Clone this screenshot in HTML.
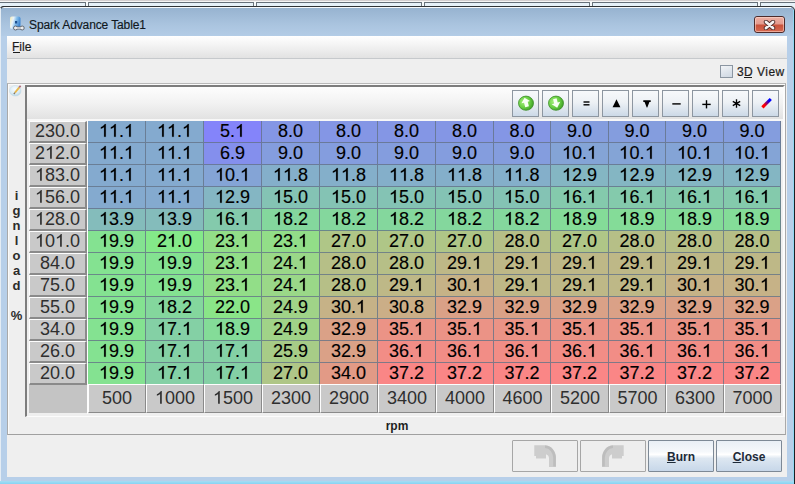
<!DOCTYPE html>
<html><head><meta charset="utf-8">
<style>
*{margin:0;padding:0;box-sizing:border-box}
html,body{width:795px;height:484px;overflow:hidden;background:#e9eef3;font-family:"Liberation Sans",sans-serif}
.a{position:absolute}
/* top strip behind window */
#strip{left:0;top:0;width:795px;height:6px;background:#e6f1f9}
#strip .l0{left:0;top:0;width:795px;height:1px;background:#d3cfd1}
#strip .l1{left:0;top:1px;width:795px;height:1px;background:#f5f5f5}
#strip .l2{left:0;top:2px;width:795px;height:1px;background:#66707a}
.tab{top:2px;width:4px;height:4px;border-left:1px solid #6a747c;border-right:1px solid #6a747c;background:#f4f8fb}
/* window */
#win{left:0;top:6px;width:795px;height:478px;background:#b7cfe9;border-top:1px solid #2e3236;border-right:1px solid #1c2024;border-radius:4px 5px 0 0}
#winhl{left:1px;top:7px;width:790px;height:1px;background:#f6f9fc}
#title{left:1px;top:8px;width:792px;height:28px;background:linear-gradient(#97b3d0,#aac4df 60%,#b3cce6)}
#lframe{left:0;top:8px;width:1px;height:476px;background:#e4ecf4}
#rframe{left:793px;top:10px;width:1px;height:474px;background:#8fd8f2}
#bframe{left:0;top:481px;width:794px;height:3px;background:linear-gradient(#a8dcf2,#84d4f4)}
#ttext{left:29px;top:18px;font-size:12px;color:#101820;white-space:nowrap;letter-spacing:-0.12px;-webkit-text-stroke:0.15px #101820}
#close{left:754px;top:16px;width:31px;height:17px;border:1px solid #4d2b2b;border-radius:3px;background:linear-gradient(#eeb0a4 0%,#e39a8e 48%,#c8503a 52%,#d66a52 100%)}
/* menu */
#menu{left:7px;top:36px;width:780px;height:22px;background:linear-gradient(#ffffff,#f4f4f4 40%,#e2e2e2)}
#menuline{left:7px;top:58px;width:780px;height:1px;background:#c6c9cc}
#content{left:7px;top:59px;width:780px;height:418px;background:#efefef}
.mtext{font-size:12px;color:#1b1b1b;white-space:nowrap;-webkit-text-stroke:0.2px #1b1b1b}
/* checkbox */
#chk{left:720px;top:65px;width:13px;height:13px;border:1px solid #8b96a2;background:linear-gradient(160deg,#f2f4f7,#dbe2ea 60%,#cfd8e2)}
/* outer panel */
#opanel{left:7px;top:83px;width:779px;height:352px;border-top:1px solid #b9b9b9;border-left:1px solid #a9a9a9;border-bottom:1px solid #a0a0a0;border-right:1px solid #a9a9a9}
#opanelhl{left:8px;top:84px;width:777px;height:350px;border-top:1px solid #fbfbfb;border-left:1px solid #fbfbfb}
#ipanel{left:25px;top:85px;width:760px;height:332px;border-top:2px solid #7d7d7d;border-left:2px solid #7d7d7d;border-right:2px solid #fcfcfc;border-bottom:1px solid #fcfcfc;background:#efefef}
#toolbar{left:27px;top:87px;width:756px;height:32px;background:linear-gradient(#fdfdfd,#f2f2f2 50%,#e2e2e2)}
#tbline{left:27px;top:119px;width:756px;height:2px;background:#f7f7f7}
.tb{position:absolute;top:90px;width:27px;height:27px;border:1px solid #8d96a0;background:linear-gradient(#f7f9fb,#edf1f5 45%,#ccd9e7);display:flex;align-items:center;justify-content:center}
.ic{position:absolute}
.one{vertical-align:baseline;overflow:visible}
.dc .one{fill:#000;stroke:#000;stroke-width:18}
.rh .one,.ch .one{fill:#2f2f2f}
/* table */
.rh{position:absolute;left:29px;width:58px;height:22px;background:#c9c9c9;border-top:1px solid #fdfdfd;border-left:1px solid #fdfdfd;border-right:2px solid #8a8a8a;border-bottom:2px solid #8a8a8a;color:#2f2f2f;font-size:18px;line-height:19px;text-align:center}
.dc{position:absolute;height:22px;border-right:1px solid rgba(100,115,135,0.8);border-bottom:1px solid rgba(100,115,135,0.8);color:#000;-webkit-text-stroke:0.15px #000;font-size:18px;line-height:21px;text-align:center}
.ch{position:absolute;top:384px;height:29px;background:#c9c9c9;border-top:1px solid #fdfdfd;border-left:1px solid #fdfdfd;border-right:1px solid #8a8a8a;border-bottom:1px solid #8a8a8a;color:#2f2f2f;font-size:18px;line-height:27px;text-align:center}
#corner{left:29px;top:385px;width:58px;height:28px;background:#c4c4c4}
#wline{left:87px;top:120px;width:1px;height:294px;background:#fdfdfd}
#vlab{left:9px;top:188px;width:15px;font-size:13px;font-weight:bold;line-height:15px;color:#2b2b2b;text-align:center}
#rpm{left:7px;top:419px;width:780px;text-align:center;font-size:12px;font-weight:bold;color:#1f1f1f}
.bb{position:absolute;top:440px;width:66px;height:32px;border:1px solid #7d8996;border-radius:1px;background:linear-gradient(#e9eff6,#f5f8fb 35%,#ffffff 45%,#dde7f1 58%,#c7d7e9);font-size:12px;font-weight:bold;color:#1d2a38;text-align:center;line-height:32px}
.bd{border:1px solid #a6a6a6;background:#eeeeee}
</style></head><body>
<div id="strip" class="a"><div class="a l0"></div><div class="a l1"></div><div class="a l2"></div></div>
<div class="a tab" style="left:85px"></div>
<div class="a tab" style="left:253px"></div>
<div class="a tab" style="left:421px"></div>
<div class="a tab" style="left:589px"></div>
<div class="a tab" style="left:757px"></div>
<div id="win" class="a"></div>
<div id="winhl" class="a"></div>
<div id="title" class="a"></div>
<svg class="a" style="left:0;top:5px" width="5" height="5" viewBox="0 0 5 5"><path d="M0.3 4.5 Q0.8 1.5 4 1.5" stroke="#2e3236" stroke-width="1.1" fill="none"/></svg>
<div id="lframe" class="a"></div>
<div id="rframe" class="a"></div>
<div id="bframe" class="a"></div>
<!-- title icon -->
<svg class="a" style="left:9px;top:16px" width="16" height="16" viewBox="0 0 16 16">
<defs><linearGradient id="ti" x1="0" y1="0" x2="1" y2="0.3"><stop offset="0" stop-color="#f6eeb8"/><stop offset="0.35" stop-color="#e8f2fa"/><stop offset="0.6" stop-color="#8ec4ee"/><stop offset="1" stop-color="#3f86d0"/></linearGradient></defs>
<rect x="1" y="0.5" width="10.5" height="12.5" rx="2" fill="url(#ti)"/>
<rect x="6" y="5" width="2.2" height="2.5" fill="#1d4f8e"/>
<path d="M6.5 12 L13 12" stroke="#58606a" stroke-width="3"/>
<circle cx="6.5" cy="12" r="2" fill="#ececee" stroke="#58606a" stroke-width="0.9"/>
<circle cx="13.2" cy="12" r="2" fill="#ececee" stroke="#58606a" stroke-width="0.9"/>
<path d="M7 12 L12.6 12" stroke="#ececee" stroke-width="1.4"/>
</svg>
<div id="ttext" class="a">Spark Advance Table1</div>
<div id="close" class="a"><div class="a" style="left:0;top:0;width:29px;height:15px;border:1px solid rgba(255,220,210,0.55);border-radius:2px"></div><svg class="a" style="left:8px;top:3px" width="13" height="10" viewBox="0 0 13 10"><path d="M3 2 L10 8 M10 2 L3 8" stroke="#4a2a28" stroke-width="4.4" stroke-linecap="round"/><path d="M3 2 L10 8 M10 2 L3 8" stroke="#f6f2f2" stroke-width="2.8" stroke-linecap="round"/></svg></div>
<div id="menu" class="a"></div>
<div id="menuline" class="a"></div>
<div id="content" class="a"></div>
<div class="a mtext" style="left:12px;top:40px">File</div>
<div class="a" style="left:13px;top:52px;width:7px;height:1px;background:#1b1b1b"></div>
<div id="chk" class="a"></div>
<div class="a mtext" style="left:737px;top:65px;color:#1e1e1e;letter-spacing:0.45px">3D View</div>
<div class="a" style="left:744px;top:77px;width:8px;height:1px;background:#1e1e1e"></div>
<div id="opanel" class="a"></div>
<div id="opanelhl" class="a"></div>
<!-- pencil icon -->
<svg class="a" style="left:8px;top:84px" width="16" height="14" viewBox="0 0 16 14">
<defs><radialGradient id="eg" cx="45%" cy="35%" r="70%"><stop offset="0" stop-color="#f8fcff"/><stop offset="0.6" stop-color="#dcecf4"/><stop offset="1" stop-color="#a9cfe2"/></radialGradient></defs>
<ellipse cx="7.3" cy="6.8" rx="5.8" ry="5.3" fill="url(#eg)" stroke="#c4dbe6" stroke-width="0.5"/>
<path d="M7 8.6 L11.3 3.4" stroke="#e9b84a" stroke-width="1.8"/>
<path d="M5.8 10 L7 8.6" stroke="#7a7060" stroke-width="1.2"/>
<path d="M11.3 3.4 L12.6 1.8" stroke="#b0687a" stroke-width="1.7"/>
</svg>
<div id="vlab" class="a">i<br>g<br>n<br>l<br>o<br>a<br>d<br>&nbsp;<br>%</div>
<div id="ipanel" class="a"></div>
<div id="toolbar" class="a"></div>
<div id="tbline" class="a"></div>
<div class="tb" style="left:512px"><svg width="17" height="17" viewBox="0 0 17 17" style="margin-top:-2px"><defs><radialGradient id="g1" cx="35%" cy="40%" r="70%"><stop offset="0" stop-color="#a6f07e"/><stop offset="0.55" stop-color="#6ad044"/><stop offset="1" stop-color="#3c9c26"/></radialGradient></defs><ellipse cx="9" cy="9.2" rx="7.5" ry="7.1" fill="url(#g1)" stroke="#3e8e2a" stroke-width="0.8"/><g transform="rotate(-15 9 9.2)"><path d="M9 3.6 L13.4 8.2 L11 8.2 L11 13 L7.2 13 L7.2 8.2 L4.6 8.2 Z" fill="#f8fff4"/></g></svg></div>
<div class="tb" style="left:542px"><svg width="17" height="17" viewBox="0 0 17 17" style="margin-top:-2px"><ellipse cx="9" cy="9.2" rx="7.5" ry="7.1" fill="url(#g1)" stroke="#3e8e2a" stroke-width="0.8"/><g transform="rotate(-15 9 9.2)"><path d="M7.2 4.6 L10.8 4.6 L10.8 9 L13.4 9 L9 13.8 L4.6 9 L7.2 9 Z" fill="#f8fff4"/></g></svg></div>
<div class="tb" style="left:572px"><svg class="ic" style="left:10px;top:10px" width="7" height="5" viewBox="0 0 7 5"><rect x="0.5" y="0.3" width="6" height="1.4" fill="#000"/><rect x="0.5" y="3.1" width="6" height="1.4" fill="#000"/></svg></div>
<div class="tb" style="left:602px"><svg class="ic" style="left:9px;top:8px" width="9" height="9" viewBox="0 0 9 9"><path d="M4.5 0.3 L5.1 1.5 L8.4 8.3 L0.6 8.3 L3.9 1.5 Z" fill="#000"/></svg></div>
<div class="tb" style="left:632px"><svg class="ic" style="left:10px;top:9px" width="8" height="8" viewBox="0 0 8 8"><path d="M0.3 0.3 L7.7 0.3 L7.7 2 L6.4 2 L4.3 7.5 L3.7 7.5 L1.6 2 L0.3 2 Z" fill="#000"/></svg></div>
<div class="tb" style="left:662px"><svg class="ic" style="left:9px;top:12px" width="9" height="2" viewBox="0 0 9 2"><rect x="0.3" y="0.2" width="8.4" height="1.4" fill="#000"/></svg></div>
<div class="tb" style="left:692px"><svg class="ic" style="left:9px;top:9px" width="9" height="9" viewBox="0 0 9 9"><rect x="0.3" y="3.7" width="8.4" height="1.4" fill="#000"/><rect x="3.8" y="0.2" width="1.4" height="8.2" fill="#000"/></svg></div>
<div class="tb" style="left:722px"><svg class="ic" style="left:9px;top:8px" width="9" height="9" viewBox="0 0 9 9"><path d="M4.5 0.3 L4.5 8.7 M0.8 2.4 L8.2 6.6 M8.2 2.4 L0.8 6.6" stroke="#000" stroke-width="1.35" fill="none"/></svg></div>
<div class="tb" style="left:752px"><svg class="ic" style="left:0;top:0" width="25" height="25" viewBox="0 0 25 25"><defs><linearGradient id="pg" x1="9" y1="16" x2="18" y2="7" gradientUnits="userSpaceOnUse"><stop offset="0.25" stop-color="#ff0000"/><stop offset="0.75" stop-color="#0000ff"/></linearGradient></defs><path d="M8.3 15.3 L10.5 17.5 L18.9 9.1 L16.7 6.9 Z" fill="url(#pg)"/></svg></div>
<div id="wline" class="a"></div>
<div class="rh" style="top:121px">230.0</div>
<div class="dc" style="left:88px;top:121px;width:58px;background:rgb(132,170,207)"><svg class="one" width="10.01" height="12.88" viewBox="0 0 1139 1466"><path d="M773 0 L773 1466 L580 1466 L580 336 C520 391 440 446 360 481 C300 511 250 526 213 541 L213 366 C330 316 430 251 520 166 C590 101 640 46 665 0 Z"/></svg><svg class="one" width="10.01" height="12.88" viewBox="0 0 1139 1466"><path d="M773 0 L773 1466 L580 1466 L580 336 C520 391 440 446 360 481 C300 511 250 526 213 541 L213 366 C330 316 430 251 520 166 C590 101 640 46 665 0 Z"/></svg>.<svg class="one" width="10.01" height="12.88" viewBox="0 0 1139 1466"><path d="M773 0 L773 1466 L580 1466 L580 336 C520 391 440 446 360 481 C300 511 250 526 213 541 L213 366 C330 316 430 251 520 166 C590 101 640 46 665 0 Z"/></svg></div>
<div class="dc" style="left:146px;top:121px;width:58px;background:rgb(132,170,207)"><svg class="one" width="10.01" height="12.88" viewBox="0 0 1139 1466"><path d="M773 0 L773 1466 L580 1466 L580 336 C520 391 440 446 360 481 C300 511 250 526 213 541 L213 366 C330 316 430 251 520 166 C590 101 640 46 665 0 Z"/></svg><svg class="one" width="10.01" height="12.88" viewBox="0 0 1139 1466"><path d="M773 0 L773 1466 L580 1466 L580 336 C520 391 440 446 360 481 C300 511 250 526 213 541 L213 366 C330 316 430 251 520 166 C590 101 640 46 665 0 Z"/></svg>.<svg class="one" width="10.01" height="12.88" viewBox="0 0 1139 1466"><path d="M773 0 L773 1466 L580 1466 L580 336 C520 391 440 446 360 481 C300 511 250 526 213 541 L213 366 C330 316 430 251 520 166 C590 101 640 46 665 0 Z"/></svg></div>
<div class="dc" style="left:204px;top:121px;width:58px;background:rgb(132,132,250)">5.<svg class="one" width="10.01" height="12.88" viewBox="0 0 1139 1466"><path d="M773 0 L773 1466 L580 1466 L580 336 C520 391 440 446 360 481 C300 511 250 526 213 541 L213 366 C330 316 430 251 520 166 C590 101 640 46 665 0 Z"/></svg></div>
<div class="dc" style="left:262px;top:121px;width:58px;background:rgb(132,150,229)">8.0</div>
<div class="dc" style="left:320px;top:121px;width:58px;background:rgb(132,150,229)">8.0</div>
<div class="dc" style="left:378px;top:121px;width:58px;background:rgb(132,150,229)">8.0</div>
<div class="dc" style="left:436px;top:121px;width:58px;background:rgb(132,150,229)">8.0</div>
<div class="dc" style="left:494px;top:121px;width:57px;background:rgb(132,150,229)">8.0</div>
<div class="dc" style="left:551px;top:121px;width:58px;background:rgb(132,157,222)">9.0</div>
<div class="dc" style="left:609px;top:121px;width:57px;background:rgb(132,157,222)">9.0</div>
<div class="dc" style="left:666px;top:121px;width:58px;background:rgb(132,157,222)">9.0</div>
<div class="dc" style="left:724px;top:121px;width:57px;background:rgb(132,157,222)">9.0</div>
<div class="rh" style="top:143px">2<svg class="one" width="10.01" height="12.88" viewBox="0 0 1139 1466"><path d="M773 0 L773 1466 L580 1466 L580 336 C520 391 440 446 360 481 C300 511 250 526 213 541 L213 366 C330 316 430 251 520 166 C590 101 640 46 665 0 Z"/></svg>2.0</div>
<div class="dc" style="left:88px;top:143px;width:58px;background:rgb(132,170,207)"><svg class="one" width="10.01" height="12.88" viewBox="0 0 1139 1466"><path d="M773 0 L773 1466 L580 1466 L580 336 C520 391 440 446 360 481 C300 511 250 526 213 541 L213 366 C330 316 430 251 520 166 C590 101 640 46 665 0 Z"/></svg><svg class="one" width="10.01" height="12.88" viewBox="0 0 1139 1466"><path d="M773 0 L773 1466 L580 1466 L580 336 C520 391 440 446 360 481 C300 511 250 526 213 541 L213 366 C330 316 430 251 520 166 C590 101 640 46 665 0 Z"/></svg>.<svg class="one" width="10.01" height="12.88" viewBox="0 0 1139 1466"><path d="M773 0 L773 1466 L580 1466 L580 336 C520 391 440 446 360 481 C300 511 250 526 213 541 L213 366 C330 316 430 251 520 166 C590 101 640 46 665 0 Z"/></svg></div>
<div class="dc" style="left:146px;top:143px;width:58px;background:rgb(132,170,207)"><svg class="one" width="10.01" height="12.88" viewBox="0 0 1139 1466"><path d="M773 0 L773 1466 L580 1466 L580 336 C520 391 440 446 360 481 C300 511 250 526 213 541 L213 366 C330 316 430 251 520 166 C590 101 640 46 665 0 Z"/></svg><svg class="one" width="10.01" height="12.88" viewBox="0 0 1139 1466"><path d="M773 0 L773 1466 L580 1466 L580 336 C520 391 440 446 360 481 C300 511 250 526 213 541 L213 366 C330 316 430 251 520 166 C590 101 640 46 665 0 Z"/></svg>.<svg class="one" width="10.01" height="12.88" viewBox="0 0 1139 1466"><path d="M773 0 L773 1466 L580 1466 L580 336 C520 391 440 446 360 481 C300 511 250 526 213 541 L213 366 C330 316 430 251 520 166 C590 101 640 46 665 0 Z"/></svg></div>
<div class="dc" style="left:204px;top:143px;width:58px;background:rgb(132,143,237)">6.9</div>
<div class="dc" style="left:262px;top:143px;width:58px;background:rgb(132,157,222)">9.0</div>
<div class="dc" style="left:320px;top:143px;width:58px;background:rgb(132,157,222)">9.0</div>
<div class="dc" style="left:378px;top:143px;width:58px;background:rgb(132,157,222)">9.0</div>
<div class="dc" style="left:436px;top:143px;width:58px;background:rgb(132,157,222)">9.0</div>
<div class="dc" style="left:494px;top:143px;width:57px;background:rgb(132,157,222)">9.0</div>
<div class="dc" style="left:551px;top:143px;width:58px;background:rgb(132,164,214)"><svg class="one" width="10.01" height="12.88" viewBox="0 0 1139 1466"><path d="M773 0 L773 1466 L580 1466 L580 336 C520 391 440 446 360 481 C300 511 250 526 213 541 L213 366 C330 316 430 251 520 166 C590 101 640 46 665 0 Z"/></svg>0.<svg class="one" width="10.01" height="12.88" viewBox="0 0 1139 1466"><path d="M773 0 L773 1466 L580 1466 L580 336 C520 391 440 446 360 481 C300 511 250 526 213 541 L213 366 C330 316 430 251 520 166 C590 101 640 46 665 0 Z"/></svg></div>
<div class="dc" style="left:609px;top:143px;width:57px;background:rgb(132,164,214)"><svg class="one" width="10.01" height="12.88" viewBox="0 0 1139 1466"><path d="M773 0 L773 1466 L580 1466 L580 336 C520 391 440 446 360 481 C300 511 250 526 213 541 L213 366 C330 316 430 251 520 166 C590 101 640 46 665 0 Z"/></svg>0.<svg class="one" width="10.01" height="12.88" viewBox="0 0 1139 1466"><path d="M773 0 L773 1466 L580 1466 L580 336 C520 391 440 446 360 481 C300 511 250 526 213 541 L213 366 C330 316 430 251 520 166 C590 101 640 46 665 0 Z"/></svg></div>
<div class="dc" style="left:666px;top:143px;width:58px;background:rgb(132,164,214)"><svg class="one" width="10.01" height="12.88" viewBox="0 0 1139 1466"><path d="M773 0 L773 1466 L580 1466 L580 336 C520 391 440 446 360 481 C300 511 250 526 213 541 L213 366 C330 316 430 251 520 166 C590 101 640 46 665 0 Z"/></svg>0.<svg class="one" width="10.01" height="12.88" viewBox="0 0 1139 1466"><path d="M773 0 L773 1466 L580 1466 L580 336 C520 391 440 446 360 481 C300 511 250 526 213 541 L213 366 C330 316 430 251 520 166 C590 101 640 46 665 0 Z"/></svg></div>
<div class="dc" style="left:724px;top:143px;width:57px;background:rgb(132,164,214)"><svg class="one" width="10.01" height="12.88" viewBox="0 0 1139 1466"><path d="M773 0 L773 1466 L580 1466 L580 336 C520 391 440 446 360 481 C300 511 250 526 213 541 L213 366 C330 316 430 251 520 166 C590 101 640 46 665 0 Z"/></svg>0.<svg class="one" width="10.01" height="12.88" viewBox="0 0 1139 1466"><path d="M773 0 L773 1466 L580 1466 L580 336 C520 391 440 446 360 481 C300 511 250 526 213 541 L213 366 C330 316 430 251 520 166 C590 101 640 46 665 0 Z"/></svg></div>
<div class="rh" style="top:165px"><svg class="one" width="10.01" height="12.88" viewBox="0 0 1139 1466"><path d="M773 0 L773 1466 L580 1466 L580 336 C520 391 440 446 360 481 C300 511 250 526 213 541 L213 366 C330 316 430 251 520 166 C590 101 640 46 665 0 Z"/></svg>83.0</div>
<div class="dc" style="left:88px;top:165px;width:58px;background:rgb(132,170,207)"><svg class="one" width="10.01" height="12.88" viewBox="0 0 1139 1466"><path d="M773 0 L773 1466 L580 1466 L580 336 C520 391 440 446 360 481 C300 511 250 526 213 541 L213 366 C330 316 430 251 520 166 C590 101 640 46 665 0 Z"/></svg><svg class="one" width="10.01" height="12.88" viewBox="0 0 1139 1466"><path d="M773 0 L773 1466 L580 1466 L580 336 C520 391 440 446 360 481 C300 511 250 526 213 541 L213 366 C330 316 430 251 520 166 C590 101 640 46 665 0 Z"/></svg>.<svg class="one" width="10.01" height="12.88" viewBox="0 0 1139 1466"><path d="M773 0 L773 1466 L580 1466 L580 336 C520 391 440 446 360 481 C300 511 250 526 213 541 L213 366 C330 316 430 251 520 166 C590 101 640 46 665 0 Z"/></svg></div>
<div class="dc" style="left:146px;top:165px;width:58px;background:rgb(132,170,207)"><svg class="one" width="10.01" height="12.88" viewBox="0 0 1139 1466"><path d="M773 0 L773 1466 L580 1466 L580 336 C520 391 440 446 360 481 C300 511 250 526 213 541 L213 366 C330 316 430 251 520 166 C590 101 640 46 665 0 Z"/></svg><svg class="one" width="10.01" height="12.88" viewBox="0 0 1139 1466"><path d="M773 0 L773 1466 L580 1466 L580 336 C520 391 440 446 360 481 C300 511 250 526 213 541 L213 366 C330 316 430 251 520 166 C590 101 640 46 665 0 Z"/></svg>.<svg class="one" width="10.01" height="12.88" viewBox="0 0 1139 1466"><path d="M773 0 L773 1466 L580 1466 L580 336 C520 391 440 446 360 481 C300 511 250 526 213 541 L213 366 C330 316 430 251 520 166 C590 101 640 46 665 0 Z"/></svg></div>
<div class="dc" style="left:204px;top:165px;width:58px;background:rgb(132,164,214)"><svg class="one" width="10.01" height="12.88" viewBox="0 0 1139 1466"><path d="M773 0 L773 1466 L580 1466 L580 336 C520 391 440 446 360 481 C300 511 250 526 213 541 L213 366 C330 316 430 251 520 166 C590 101 640 46 665 0 Z"/></svg>0.<svg class="one" width="10.01" height="12.88" viewBox="0 0 1139 1466"><path d="M773 0 L773 1466 L580 1466 L580 336 C520 391 440 446 360 481 C300 511 250 526 213 541 L213 366 C330 316 430 251 520 166 C590 101 640 46 665 0 Z"/></svg></div>
<div class="dc" style="left:262px;top:165px;width:58px;background:rgb(132,175,202)"><svg class="one" width="10.01" height="12.88" viewBox="0 0 1139 1466"><path d="M773 0 L773 1466 L580 1466 L580 336 C520 391 440 446 360 481 C300 511 250 526 213 541 L213 366 C330 316 430 251 520 166 C590 101 640 46 665 0 Z"/></svg><svg class="one" width="10.01" height="12.88" viewBox="0 0 1139 1466"><path d="M773 0 L773 1466 L580 1466 L580 336 C520 391 440 446 360 481 C300 511 250 526 213 541 L213 366 C330 316 430 251 520 166 C590 101 640 46 665 0 Z"/></svg>.8</div>
<div class="dc" style="left:320px;top:165px;width:58px;background:rgb(132,175,202)"><svg class="one" width="10.01" height="12.88" viewBox="0 0 1139 1466"><path d="M773 0 L773 1466 L580 1466 L580 336 C520 391 440 446 360 481 C300 511 250 526 213 541 L213 366 C330 316 430 251 520 166 C590 101 640 46 665 0 Z"/></svg><svg class="one" width="10.01" height="12.88" viewBox="0 0 1139 1466"><path d="M773 0 L773 1466 L580 1466 L580 336 C520 391 440 446 360 481 C300 511 250 526 213 541 L213 366 C330 316 430 251 520 166 C590 101 640 46 665 0 Z"/></svg>.8</div>
<div class="dc" style="left:378px;top:165px;width:58px;background:rgb(132,175,202)"><svg class="one" width="10.01" height="12.88" viewBox="0 0 1139 1466"><path d="M773 0 L773 1466 L580 1466 L580 336 C520 391 440 446 360 481 C300 511 250 526 213 541 L213 366 C330 316 430 251 520 166 C590 101 640 46 665 0 Z"/></svg><svg class="one" width="10.01" height="12.88" viewBox="0 0 1139 1466"><path d="M773 0 L773 1466 L580 1466 L580 336 C520 391 440 446 360 481 C300 511 250 526 213 541 L213 366 C330 316 430 251 520 166 C590 101 640 46 665 0 Z"/></svg>.8</div>
<div class="dc" style="left:436px;top:165px;width:58px;background:rgb(132,175,202)"><svg class="one" width="10.01" height="12.88" viewBox="0 0 1139 1466"><path d="M773 0 L773 1466 L580 1466 L580 336 C520 391 440 446 360 481 C300 511 250 526 213 541 L213 366 C330 316 430 251 520 166 C590 101 640 46 665 0 Z"/></svg><svg class="one" width="10.01" height="12.88" viewBox="0 0 1139 1466"><path d="M773 0 L773 1466 L580 1466 L580 336 C520 391 440 446 360 481 C300 511 250 526 213 541 L213 366 C330 316 430 251 520 166 C590 101 640 46 665 0 Z"/></svg>.8</div>
<div class="dc" style="left:494px;top:165px;width:57px;background:rgb(132,175,202)"><svg class="one" width="10.01" height="12.88" viewBox="0 0 1139 1466"><path d="M773 0 L773 1466 L580 1466 L580 336 C520 391 440 446 360 481 C300 511 250 526 213 541 L213 366 C330 316 430 251 520 166 C590 101 640 46 665 0 Z"/></svg><svg class="one" width="10.01" height="12.88" viewBox="0 0 1139 1466"><path d="M773 0 L773 1466 L580 1466 L580 336 C520 391 440 446 360 481 C300 511 250 526 213 541 L213 366 C330 316 430 251 520 166 C590 101 640 46 665 0 Z"/></svg>.8</div>
<div class="dc" style="left:551px;top:165px;width:58px;background:rgb(132,182,195)"><svg class="one" width="10.01" height="12.88" viewBox="0 0 1139 1466"><path d="M773 0 L773 1466 L580 1466 L580 336 C520 391 440 446 360 481 C300 511 250 526 213 541 L213 366 C330 316 430 251 520 166 C590 101 640 46 665 0 Z"/></svg>2.9</div>
<div class="dc" style="left:609px;top:165px;width:57px;background:rgb(132,182,195)"><svg class="one" width="10.01" height="12.88" viewBox="0 0 1139 1466"><path d="M773 0 L773 1466 L580 1466 L580 336 C520 391 440 446 360 481 C300 511 250 526 213 541 L213 366 C330 316 430 251 520 166 C590 101 640 46 665 0 Z"/></svg>2.9</div>
<div class="dc" style="left:666px;top:165px;width:58px;background:rgb(132,182,195)"><svg class="one" width="10.01" height="12.88" viewBox="0 0 1139 1466"><path d="M773 0 L773 1466 L580 1466 L580 336 C520 391 440 446 360 481 C300 511 250 526 213 541 L213 366 C330 316 430 251 520 166 C590 101 640 46 665 0 Z"/></svg>2.9</div>
<div class="dc" style="left:724px;top:165px;width:57px;background:rgb(132,182,195)"><svg class="one" width="10.01" height="12.88" viewBox="0 0 1139 1466"><path d="M773 0 L773 1466 L580 1466 L580 336 C520 391 440 446 360 481 C300 511 250 526 213 541 L213 366 C330 316 430 251 520 166 C590 101 640 46 665 0 Z"/></svg>2.9</div>
<div class="rh" style="top:187px"><svg class="one" width="10.01" height="12.88" viewBox="0 0 1139 1466"><path d="M773 0 L773 1466 L580 1466 L580 336 C520 391 440 446 360 481 C300 511 250 526 213 541 L213 366 C330 316 430 251 520 166 C590 101 640 46 665 0 Z"/></svg>56.0</div>
<div class="dc" style="left:88px;top:187px;width:58px;background:rgb(132,170,207)"><svg class="one" width="10.01" height="12.88" viewBox="0 0 1139 1466"><path d="M773 0 L773 1466 L580 1466 L580 336 C520 391 440 446 360 481 C300 511 250 526 213 541 L213 366 C330 316 430 251 520 166 C590 101 640 46 665 0 Z"/></svg><svg class="one" width="10.01" height="12.88" viewBox="0 0 1139 1466"><path d="M773 0 L773 1466 L580 1466 L580 336 C520 391 440 446 360 481 C300 511 250 526 213 541 L213 366 C330 316 430 251 520 166 C590 101 640 46 665 0 Z"/></svg>.<svg class="one" width="10.01" height="12.88" viewBox="0 0 1139 1466"><path d="M773 0 L773 1466 L580 1466 L580 336 C520 391 440 446 360 481 C300 511 250 526 213 541 L213 366 C330 316 430 251 520 166 C590 101 640 46 665 0 Z"/></svg></div>
<div class="dc" style="left:146px;top:187px;width:58px;background:rgb(132,170,207)"><svg class="one" width="10.01" height="12.88" viewBox="0 0 1139 1466"><path d="M773 0 L773 1466 L580 1466 L580 336 C520 391 440 446 360 481 C300 511 250 526 213 541 L213 366 C330 316 430 251 520 166 C590 101 640 46 665 0 Z"/></svg><svg class="one" width="10.01" height="12.88" viewBox="0 0 1139 1466"><path d="M773 0 L773 1466 L580 1466 L580 336 C520 391 440 446 360 481 C300 511 250 526 213 541 L213 366 C330 316 430 251 520 166 C590 101 640 46 665 0 Z"/></svg>.<svg class="one" width="10.01" height="12.88" viewBox="0 0 1139 1466"><path d="M773 0 L773 1466 L580 1466 L580 336 C520 391 440 446 360 481 C300 511 250 526 213 541 L213 366 C330 316 430 251 520 166 C590 101 640 46 665 0 Z"/></svg></div>
<div class="dc" style="left:204px;top:187px;width:58px;background:rgb(132,182,195)"><svg class="one" width="10.01" height="12.88" viewBox="0 0 1139 1466"><path d="M773 0 L773 1466 L580 1466 L580 336 C520 391 440 446 360 481 C300 511 250 526 213 541 L213 366 C330 316 430 251 520 166 C590 101 640 46 665 0 Z"/></svg>2.9</div>
<div class="dc" style="left:262px;top:187px;width:58px;background:rgb(132,195,180)"><svg class="one" width="10.01" height="12.88" viewBox="0 0 1139 1466"><path d="M773 0 L773 1466 L580 1466 L580 336 C520 391 440 446 360 481 C300 511 250 526 213 541 L213 366 C330 316 430 251 520 166 C590 101 640 46 665 0 Z"/></svg>5.0</div>
<div class="dc" style="left:320px;top:187px;width:58px;background:rgb(132,195,180)"><svg class="one" width="10.01" height="12.88" viewBox="0 0 1139 1466"><path d="M773 0 L773 1466 L580 1466 L580 336 C520 391 440 446 360 481 C300 511 250 526 213 541 L213 366 C330 316 430 251 520 166 C590 101 640 46 665 0 Z"/></svg>5.0</div>
<div class="dc" style="left:378px;top:187px;width:58px;background:rgb(132,195,180)"><svg class="one" width="10.01" height="12.88" viewBox="0 0 1139 1466"><path d="M773 0 L773 1466 L580 1466 L580 336 C520 391 440 446 360 481 C300 511 250 526 213 541 L213 366 C330 316 430 251 520 166 C590 101 640 46 665 0 Z"/></svg>5.0</div>
<div class="dc" style="left:436px;top:187px;width:58px;background:rgb(132,195,180)"><svg class="one" width="10.01" height="12.88" viewBox="0 0 1139 1466"><path d="M773 0 L773 1466 L580 1466 L580 336 C520 391 440 446 360 481 C300 511 250 526 213 541 L213 366 C330 316 430 251 520 166 C590 101 640 46 665 0 Z"/></svg>5.0</div>
<div class="dc" style="left:494px;top:187px;width:57px;background:rgb(132,195,180)"><svg class="one" width="10.01" height="12.88" viewBox="0 0 1139 1466"><path d="M773 0 L773 1466 L580 1466 L580 336 C520 391 440 446 360 481 C300 511 250 526 213 541 L213 366 C330 316 430 251 520 166 C590 101 640 46 665 0 Z"/></svg>5.0</div>
<div class="dc" style="left:551px;top:187px;width:58px;background:rgb(132,202,172)"><svg class="one" width="10.01" height="12.88" viewBox="0 0 1139 1466"><path d="M773 0 L773 1466 L580 1466 L580 336 C520 391 440 446 360 481 C300 511 250 526 213 541 L213 366 C330 316 430 251 520 166 C590 101 640 46 665 0 Z"/></svg>6.<svg class="one" width="10.01" height="12.88" viewBox="0 0 1139 1466"><path d="M773 0 L773 1466 L580 1466 L580 336 C520 391 440 446 360 481 C300 511 250 526 213 541 L213 366 C330 316 430 251 520 166 C590 101 640 46 665 0 Z"/></svg></div>
<div class="dc" style="left:609px;top:187px;width:57px;background:rgb(132,202,172)"><svg class="one" width="10.01" height="12.88" viewBox="0 0 1139 1466"><path d="M773 0 L773 1466 L580 1466 L580 336 C520 391 440 446 360 481 C300 511 250 526 213 541 L213 366 C330 316 430 251 520 166 C590 101 640 46 665 0 Z"/></svg>6.<svg class="one" width="10.01" height="12.88" viewBox="0 0 1139 1466"><path d="M773 0 L773 1466 L580 1466 L580 336 C520 391 440 446 360 481 C300 511 250 526 213 541 L213 366 C330 316 430 251 520 166 C590 101 640 46 665 0 Z"/></svg></div>
<div class="dc" style="left:666px;top:187px;width:58px;background:rgb(132,202,172)"><svg class="one" width="10.01" height="12.88" viewBox="0 0 1139 1466"><path d="M773 0 L773 1466 L580 1466 L580 336 C520 391 440 446 360 481 C300 511 250 526 213 541 L213 366 C330 316 430 251 520 166 C590 101 640 46 665 0 Z"/></svg>6.<svg class="one" width="10.01" height="12.88" viewBox="0 0 1139 1466"><path d="M773 0 L773 1466 L580 1466 L580 336 C520 391 440 446 360 481 C300 511 250 526 213 541 L213 366 C330 316 430 251 520 166 C590 101 640 46 665 0 Z"/></svg></div>
<div class="dc" style="left:724px;top:187px;width:57px;background:rgb(132,202,172)"><svg class="one" width="10.01" height="12.88" viewBox="0 0 1139 1466"><path d="M773 0 L773 1466 L580 1466 L580 336 C520 391 440 446 360 481 C300 511 250 526 213 541 L213 366 C330 316 430 251 520 166 C590 101 640 46 665 0 Z"/></svg>6.<svg class="one" width="10.01" height="12.88" viewBox="0 0 1139 1466"><path d="M773 0 L773 1466 L580 1466 L580 336 C520 391 440 446 360 481 C300 511 250 526 213 541 L213 366 C330 316 430 251 520 166 C590 101 640 46 665 0 Z"/></svg></div>
<div class="rh" style="top:209px"><svg class="one" width="10.01" height="12.88" viewBox="0 0 1139 1466"><path d="M773 0 L773 1466 L580 1466 L580 336 C520 391 440 446 360 481 C300 511 250 526 213 541 L213 366 C330 316 430 251 520 166 C590 101 640 46 665 0 Z"/></svg>28.0</div>
<div class="dc" style="left:88px;top:209px;width:58px;background:rgb(132,188,187)"><svg class="one" width="10.01" height="12.88" viewBox="0 0 1139 1466"><path d="M773 0 L773 1466 L580 1466 L580 336 C520 391 440 446 360 481 C300 511 250 526 213 541 L213 366 C330 316 430 251 520 166 C590 101 640 46 665 0 Z"/></svg>3.9</div>
<div class="dc" style="left:146px;top:209px;width:58px;background:rgb(132,188,187)"><svg class="one" width="10.01" height="12.88" viewBox="0 0 1139 1466"><path d="M773 0 L773 1466 L580 1466 L580 336 C520 391 440 446 360 481 C300 511 250 526 213 541 L213 366 C330 316 430 251 520 166 C590 101 640 46 665 0 Z"/></svg>3.9</div>
<div class="dc" style="left:204px;top:209px;width:58px;background:rgb(132,202,172)"><svg class="one" width="10.01" height="12.88" viewBox="0 0 1139 1466"><path d="M773 0 L773 1466 L580 1466 L580 336 C520 391 440 446 360 481 C300 511 250 526 213 541 L213 366 C330 316 430 251 520 166 C590 101 640 46 665 0 Z"/></svg>6.<svg class="one" width="10.01" height="12.88" viewBox="0 0 1139 1466"><path d="M773 0 L773 1466 L580 1466 L580 336 C520 391 440 446 360 481 C300 511 250 526 213 541 L213 366 C330 316 430 251 520 166 C590 101 640 46 665 0 Z"/></svg></div>
<div class="dc" style="left:262px;top:209px;width:58px;background:rgb(132,215,157)"><svg class="one" width="10.01" height="12.88" viewBox="0 0 1139 1466"><path d="M773 0 L773 1466 L580 1466 L580 336 C520 391 440 446 360 481 C300 511 250 526 213 541 L213 366 C330 316 430 251 520 166 C590 101 640 46 665 0 Z"/></svg>8.2</div>
<div class="dc" style="left:320px;top:209px;width:58px;background:rgb(132,215,157)"><svg class="one" width="10.01" height="12.88" viewBox="0 0 1139 1466"><path d="M773 0 L773 1466 L580 1466 L580 336 C520 391 440 446 360 481 C300 511 250 526 213 541 L213 366 C330 316 430 251 520 166 C590 101 640 46 665 0 Z"/></svg>8.2</div>
<div class="dc" style="left:378px;top:209px;width:58px;background:rgb(132,215,157)"><svg class="one" width="10.01" height="12.88" viewBox="0 0 1139 1466"><path d="M773 0 L773 1466 L580 1466 L580 336 C520 391 440 446 360 481 C300 511 250 526 213 541 L213 366 C330 316 430 251 520 166 C590 101 640 46 665 0 Z"/></svg>8.2</div>
<div class="dc" style="left:436px;top:209px;width:58px;background:rgb(132,215,157)"><svg class="one" width="10.01" height="12.88" viewBox="0 0 1139 1466"><path d="M773 0 L773 1466 L580 1466 L580 336 C520 391 440 446 360 481 C300 511 250 526 213 541 L213 366 C330 316 430 251 520 166 C590 101 640 46 665 0 Z"/></svg>8.2</div>
<div class="dc" style="left:494px;top:209px;width:57px;background:rgb(132,215,157)"><svg class="one" width="10.01" height="12.88" viewBox="0 0 1139 1466"><path d="M773 0 L773 1466 L580 1466 L580 336 C520 391 440 446 360 481 C300 511 250 526 213 541 L213 366 C330 316 430 251 520 166 C590 101 640 46 665 0 Z"/></svg>8.2</div>
<div class="dc" style="left:551px;top:209px;width:58px;background:rgb(132,220,152)"><svg class="one" width="10.01" height="12.88" viewBox="0 0 1139 1466"><path d="M773 0 L773 1466 L580 1466 L580 336 C520 391 440 446 360 481 C300 511 250 526 213 541 L213 366 C330 316 430 251 520 166 C590 101 640 46 665 0 Z"/></svg>8.9</div>
<div class="dc" style="left:609px;top:209px;width:57px;background:rgb(132,220,152)"><svg class="one" width="10.01" height="12.88" viewBox="0 0 1139 1466"><path d="M773 0 L773 1466 L580 1466 L580 336 C520 391 440 446 360 481 C300 511 250 526 213 541 L213 366 C330 316 430 251 520 166 C590 101 640 46 665 0 Z"/></svg>8.9</div>
<div class="dc" style="left:666px;top:209px;width:58px;background:rgb(132,220,152)"><svg class="one" width="10.01" height="12.88" viewBox="0 0 1139 1466"><path d="M773 0 L773 1466 L580 1466 L580 336 C520 391 440 446 360 481 C300 511 250 526 213 541 L213 366 C330 316 430 251 520 166 C590 101 640 46 665 0 Z"/></svg>8.9</div>
<div class="dc" style="left:724px;top:209px;width:57px;background:rgb(132,220,152)"><svg class="one" width="10.01" height="12.88" viewBox="0 0 1139 1466"><path d="M773 0 L773 1466 L580 1466 L580 336 C520 391 440 446 360 481 C300 511 250 526 213 541 L213 366 C330 316 430 251 520 166 C590 101 640 46 665 0 Z"/></svg>8.9</div>
<div class="rh" style="top:231px"><svg class="one" width="10.01" height="12.88" viewBox="0 0 1139 1466"><path d="M773 0 L773 1466 L580 1466 L580 336 C520 391 440 446 360 481 C300 511 250 526 213 541 L213 366 C330 316 430 251 520 166 C590 101 640 46 665 0 Z"/></svg>0<svg class="one" width="10.01" height="12.88" viewBox="0 0 1139 1466"><path d="M773 0 L773 1466 L580 1466 L580 336 C520 391 440 446 360 481 C300 511 250 526 213 541 L213 366 C330 316 430 251 520 166 C590 101 640 46 665 0 Z"/></svg>.0</div>
<div class="dc" style="left:88px;top:231px;width:58px;background:rgb(132,226,145)"><svg class="one" width="10.01" height="12.88" viewBox="0 0 1139 1466"><path d="M773 0 L773 1466 L580 1466 L580 336 C520 391 440 446 360 481 C300 511 250 526 213 541 L213 366 C330 316 430 251 520 166 C590 101 640 46 665 0 Z"/></svg>9.9</div>
<div class="dc" style="left:146px;top:231px;width:58px;background:rgb(132,233,137)">2<svg class="one" width="10.01" height="12.88" viewBox="0 0 1139 1466"><path d="M773 0 L773 1466 L580 1466 L580 336 C520 391 440 446 360 481 C300 511 250 526 213 541 L213 366 C330 316 430 251 520 166 C590 101 640 46 665 0 Z"/></svg>.0</div>
<div class="dc" style="left:204px;top:231px;width:58px;background:rgb(146,222,136)">23.<svg class="one" width="10.01" height="12.88" viewBox="0 0 1139 1466"><path d="M773 0 L773 1466 L580 1466 L580 336 C520 391 440 446 360 481 C300 511 250 526 213 541 L213 366 C330 316 430 251 520 166 C590 101 640 46 665 0 Z"/></svg></div>
<div class="dc" style="left:262px;top:231px;width:58px;background:rgb(146,222,136)">23.<svg class="one" width="10.01" height="12.88" viewBox="0 0 1139 1466"><path d="M773 0 L773 1466 L580 1466 L580 336 C520 391 440 446 360 481 C300 511 250 526 213 541 L213 366 C330 316 430 251 520 166 C590 101 640 46 665 0 Z"/></svg></div>
<div class="dc" style="left:320px;top:231px;width:58px;background:rgb(175,198,135)">27.0</div>
<div class="dc" style="left:378px;top:231px;width:58px;background:rgb(175,198,135)">27.0</div>
<div class="dc" style="left:436px;top:231px;width:58px;background:rgb(175,198,135)">27.0</div>
<div class="dc" style="left:494px;top:231px;width:57px;background:rgb(182,191,135)">28.0</div>
<div class="dc" style="left:551px;top:231px;width:58px;background:rgb(175,198,135)">27.0</div>
<div class="dc" style="left:609px;top:231px;width:57px;background:rgb(182,191,135)">28.0</div>
<div class="dc" style="left:666px;top:231px;width:58px;background:rgb(182,191,135)">28.0</div>
<div class="dc" style="left:724px;top:231px;width:57px;background:rgb(182,191,135)">28.0</div>
<div class="rh" style="top:253px">84.0</div>
<div class="dc" style="left:88px;top:253px;width:58px;background:rgb(132,226,145)"><svg class="one" width="10.01" height="12.88" viewBox="0 0 1139 1466"><path d="M773 0 L773 1466 L580 1466 L580 336 C520 391 440 446 360 481 C300 511 250 526 213 541 L213 366 C330 316 430 251 520 166 C590 101 640 46 665 0 Z"/></svg>9.9</div>
<div class="dc" style="left:146px;top:253px;width:58px;background:rgb(132,226,145)"><svg class="one" width="10.01" height="12.88" viewBox="0 0 1139 1466"><path d="M773 0 L773 1466 L580 1466 L580 336 C520 391 440 446 360 481 C300 511 250 526 213 541 L213 366 C330 316 430 251 520 166 C590 101 640 46 665 0 Z"/></svg>9.9</div>
<div class="dc" style="left:204px;top:253px;width:58px;background:rgb(146,222,136)">23.<svg class="one" width="10.01" height="12.88" viewBox="0 0 1139 1466"><path d="M773 0 L773 1466 L580 1466 L580 336 C520 391 440 446 360 481 C300 511 250 526 213 541 L213 366 C330 316 430 251 520 166 C590 101 640 46 665 0 Z"/></svg></div>
<div class="dc" style="left:262px;top:253px;width:58px;background:rgb(154,216,136)">24.<svg class="one" width="10.01" height="12.88" viewBox="0 0 1139 1466"><path d="M773 0 L773 1466 L580 1466 L580 336 C520 391 440 446 360 481 C300 511 250 526 213 541 L213 366 C330 316 430 251 520 166 C590 101 640 46 665 0 Z"/></svg></div>
<div class="dc" style="left:320px;top:253px;width:58px;background:rgb(182,191,135)">28.0</div>
<div class="dc" style="left:378px;top:253px;width:58px;background:rgb(182,191,135)">28.0</div>
<div class="dc" style="left:436px;top:253px;width:58px;background:rgb(190,184,135)">29.<svg class="one" width="10.01" height="12.88" viewBox="0 0 1139 1466"><path d="M773 0 L773 1466 L580 1466 L580 336 C520 391 440 446 360 481 C300 511 250 526 213 541 L213 366 C330 316 430 251 520 166 C590 101 640 46 665 0 Z"/></svg></div>
<div class="dc" style="left:494px;top:253px;width:57px;background:rgb(190,184,135)">29.<svg class="one" width="10.01" height="12.88" viewBox="0 0 1139 1466"><path d="M773 0 L773 1466 L580 1466 L580 336 C520 391 440 446 360 481 C300 511 250 526 213 541 L213 366 C330 316 430 251 520 166 C590 101 640 46 665 0 Z"/></svg></div>
<div class="dc" style="left:551px;top:253px;width:58px;background:rgb(190,184,135)">29.<svg class="one" width="10.01" height="12.88" viewBox="0 0 1139 1466"><path d="M773 0 L773 1466 L580 1466 L580 336 C520 391 440 446 360 481 C300 511 250 526 213 541 L213 366 C330 316 430 251 520 166 C590 101 640 46 665 0 Z"/></svg></div>
<div class="dc" style="left:609px;top:253px;width:57px;background:rgb(190,184,135)">29.<svg class="one" width="10.01" height="12.88" viewBox="0 0 1139 1466"><path d="M773 0 L773 1466 L580 1466 L580 336 C520 391 440 446 360 481 C300 511 250 526 213 541 L213 366 C330 316 430 251 520 166 C590 101 640 46 665 0 Z"/></svg></div>
<div class="dc" style="left:666px;top:253px;width:58px;background:rgb(190,184,135)">29.<svg class="one" width="10.01" height="12.88" viewBox="0 0 1139 1466"><path d="M773 0 L773 1466 L580 1466 L580 336 C520 391 440 446 360 481 C300 511 250 526 213 541 L213 366 C330 316 430 251 520 166 C590 101 640 46 665 0 Z"/></svg></div>
<div class="dc" style="left:724px;top:253px;width:57px;background:rgb(190,184,135)">29.<svg class="one" width="10.01" height="12.88" viewBox="0 0 1139 1466"><path d="M773 0 L773 1466 L580 1466 L580 336 C520 391 440 446 360 481 C300 511 250 526 213 541 L213 366 C330 316 430 251 520 166 C590 101 640 46 665 0 Z"/></svg></div>
<div class="rh" style="top:275px">75.0</div>
<div class="dc" style="left:88px;top:275px;width:58px;background:rgb(132,226,145)"><svg class="one" width="10.01" height="12.88" viewBox="0 0 1139 1466"><path d="M773 0 L773 1466 L580 1466 L580 336 C520 391 440 446 360 481 C300 511 250 526 213 541 L213 366 C330 316 430 251 520 166 C590 101 640 46 665 0 Z"/></svg>9.9</div>
<div class="dc" style="left:146px;top:275px;width:58px;background:rgb(132,226,145)"><svg class="one" width="10.01" height="12.88" viewBox="0 0 1139 1466"><path d="M773 0 L773 1466 L580 1466 L580 336 C520 391 440 446 360 481 C300 511 250 526 213 541 L213 366 C330 316 430 251 520 166 C590 101 640 46 665 0 Z"/></svg>9.9</div>
<div class="dc" style="left:204px;top:275px;width:58px;background:rgb(146,222,136)">23.<svg class="one" width="10.01" height="12.88" viewBox="0 0 1139 1466"><path d="M773 0 L773 1466 L580 1466 L580 336 C520 391 440 446 360 481 C300 511 250 526 213 541 L213 366 C330 316 430 251 520 166 C590 101 640 46 665 0 Z"/></svg></div>
<div class="dc" style="left:262px;top:275px;width:58px;background:rgb(154,216,136)">24.<svg class="one" width="10.01" height="12.88" viewBox="0 0 1139 1466"><path d="M773 0 L773 1466 L580 1466 L580 336 C520 391 440 446 360 481 C300 511 250 526 213 541 L213 366 C330 316 430 251 520 166 C590 101 640 46 665 0 Z"/></svg></div>
<div class="dc" style="left:320px;top:275px;width:58px;background:rgb(182,191,135)">28.0</div>
<div class="dc" style="left:378px;top:275px;width:58px;background:rgb(190,184,135)">29.<svg class="one" width="10.01" height="12.88" viewBox="0 0 1139 1466"><path d="M773 0 L773 1466 L580 1466 L580 336 C520 391 440 446 360 481 C300 511 250 526 213 541 L213 366 C330 316 430 251 520 166 C590 101 640 46 665 0 Z"/></svg></div>
<div class="dc" style="left:436px;top:275px;width:58px;background:rgb(198,178,135)">30.<svg class="one" width="10.01" height="12.88" viewBox="0 0 1139 1466"><path d="M773 0 L773 1466 L580 1466 L580 336 C520 391 440 446 360 481 C300 511 250 526 213 541 L213 366 C330 316 430 251 520 166 C590 101 640 46 665 0 Z"/></svg></div>
<div class="dc" style="left:494px;top:275px;width:57px;background:rgb(190,184,135)">29.<svg class="one" width="10.01" height="12.88" viewBox="0 0 1139 1466"><path d="M773 0 L773 1466 L580 1466 L580 336 C520 391 440 446 360 481 C300 511 250 526 213 541 L213 366 C330 316 430 251 520 166 C590 101 640 46 665 0 Z"/></svg></div>
<div class="dc" style="left:551px;top:275px;width:58px;background:rgb(190,184,135)">29.<svg class="one" width="10.01" height="12.88" viewBox="0 0 1139 1466"><path d="M773 0 L773 1466 L580 1466 L580 336 C520 391 440 446 360 481 C300 511 250 526 213 541 L213 366 C330 316 430 251 520 166 C590 101 640 46 665 0 Z"/></svg></div>
<div class="dc" style="left:609px;top:275px;width:57px;background:rgb(190,184,135)">29.<svg class="one" width="10.01" height="12.88" viewBox="0 0 1139 1466"><path d="M773 0 L773 1466 L580 1466 L580 336 C520 391 440 446 360 481 C300 511 250 526 213 541 L213 366 C330 316 430 251 520 166 C590 101 640 46 665 0 Z"/></svg></div>
<div class="dc" style="left:666px;top:275px;width:58px;background:rgb(198,178,135)">30.<svg class="one" width="10.01" height="12.88" viewBox="0 0 1139 1466"><path d="M773 0 L773 1466 L580 1466 L580 336 C520 391 440 446 360 481 C300 511 250 526 213 541 L213 366 C330 316 430 251 520 166 C590 101 640 46 665 0 Z"/></svg></div>
<div class="dc" style="left:724px;top:275px;width:57px;background:rgb(198,178,135)">30.<svg class="one" width="10.01" height="12.88" viewBox="0 0 1139 1466"><path d="M773 0 L773 1466 L580 1466 L580 336 C520 391 440 446 360 481 C300 511 250 526 213 541 L213 366 C330 316 430 251 520 166 C590 101 640 46 665 0 Z"/></svg></div>
<div class="rh" style="top:297px">55.0</div>
<div class="dc" style="left:88px;top:297px;width:58px;background:rgb(132,226,145)"><svg class="one" width="10.01" height="12.88" viewBox="0 0 1139 1466"><path d="M773 0 L773 1466 L580 1466 L580 336 C520 391 440 446 360 481 C300 511 250 526 213 541 L213 366 C330 316 430 251 520 166 C590 101 640 46 665 0 Z"/></svg>9.9</div>
<div class="dc" style="left:146px;top:297px;width:58px;background:rgb(132,215,157)"><svg class="one" width="10.01" height="12.88" viewBox="0 0 1139 1466"><path d="M773 0 L773 1466 L580 1466 L580 336 C520 391 440 446 360 481 C300 511 250 526 213 541 L213 366 C330 316 430 251 520 166 C590 101 640 46 665 0 Z"/></svg>8.2</div>
<div class="dc" style="left:204px;top:297px;width:58px;background:rgb(138,229,136)">22.0</div>
<div class="dc" style="left:262px;top:297px;width:58px;background:rgb(160,211,136)">24.9</div>
<div class="dc" style="left:320px;top:297px;width:58px;background:rgb(198,178,135)">30.<svg class="one" width="10.01" height="12.88" viewBox="0 0 1139 1466"><path d="M773 0 L773 1466 L580 1466 L580 336 C520 391 440 446 360 481 C300 511 250 526 213 541 L213 366 C330 316 430 251 520 166 C590 101 640 46 665 0 Z"/></svg></div>
<div class="dc" style="left:378px;top:297px;width:58px;background:rgb(203,174,135)">30.8</div>
<div class="dc" style="left:436px;top:297px;width:58px;background:rgb(218,161,135)">32.9</div>
<div class="dc" style="left:494px;top:297px;width:57px;background:rgb(218,161,135)">32.9</div>
<div class="dc" style="left:551px;top:297px;width:58px;background:rgb(218,161,135)">32.9</div>
<div class="dc" style="left:609px;top:297px;width:57px;background:rgb(218,161,135)">32.9</div>
<div class="dc" style="left:666px;top:297px;width:58px;background:rgb(218,161,135)">32.9</div>
<div class="dc" style="left:724px;top:297px;width:57px;background:rgb(218,161,135)">32.9</div>
<div class="rh" style="top:319px">34.0</div>
<div class="dc" style="left:88px;top:319px;width:58px;background:rgb(132,226,145)"><svg class="one" width="10.01" height="12.88" viewBox="0 0 1139 1466"><path d="M773 0 L773 1466 L580 1466 L580 336 C520 391 440 446 360 481 C300 511 250 526 213 541 L213 366 C330 316 430 251 520 166 C590 101 640 46 665 0 Z"/></svg>9.9</div>
<div class="dc" style="left:146px;top:319px;width:58px;background:rgb(132,208,165)"><svg class="one" width="10.01" height="12.88" viewBox="0 0 1139 1466"><path d="M773 0 L773 1466 L580 1466 L580 336 C520 391 440 446 360 481 C300 511 250 526 213 541 L213 366 C330 316 430 251 520 166 C590 101 640 46 665 0 Z"/></svg>7.<svg class="one" width="10.01" height="12.88" viewBox="0 0 1139 1466"><path d="M773 0 L773 1466 L580 1466 L580 336 C520 391 440 446 360 481 C300 511 250 526 213 541 L213 366 C330 316 430 251 520 166 C590 101 640 46 665 0 Z"/></svg></div>
<div class="dc" style="left:204px;top:319px;width:58px;background:rgb(132,220,152)"><svg class="one" width="10.01" height="12.88" viewBox="0 0 1139 1466"><path d="M773 0 L773 1466 L580 1466 L580 336 C520 391 440 446 360 481 C300 511 250 526 213 541 L213 366 C330 316 430 251 520 166 C590 101 640 46 665 0 Z"/></svg>8.9</div>
<div class="dc" style="left:262px;top:319px;width:58px;background:rgb(160,211,136)">24.9</div>
<div class="dc" style="left:320px;top:319px;width:58px;background:rgb(218,161,135)">32.9</div>
<div class="dc" style="left:378px;top:319px;width:58px;background:rgb(235,147,134)">35.<svg class="one" width="10.01" height="12.88" viewBox="0 0 1139 1466"><path d="M773 0 L773 1466 L580 1466 L580 336 C520 391 440 446 360 481 C300 511 250 526 213 541 L213 366 C330 316 430 251 520 166 C590 101 640 46 665 0 Z"/></svg></div>
<div class="dc" style="left:436px;top:319px;width:58px;background:rgb(235,147,134)">35.<svg class="one" width="10.01" height="12.88" viewBox="0 0 1139 1466"><path d="M773 0 L773 1466 L580 1466 L580 336 C520 391 440 446 360 481 C300 511 250 526 213 541 L213 366 C330 316 430 251 520 166 C590 101 640 46 665 0 Z"/></svg></div>
<div class="dc" style="left:494px;top:319px;width:57px;background:rgb(235,147,134)">35.<svg class="one" width="10.01" height="12.88" viewBox="0 0 1139 1466"><path d="M773 0 L773 1466 L580 1466 L580 336 C520 391 440 446 360 481 C300 511 250 526 213 541 L213 366 C330 316 430 251 520 166 C590 101 640 46 665 0 Z"/></svg></div>
<div class="dc" style="left:551px;top:319px;width:58px;background:rgb(235,147,134)">35.<svg class="one" width="10.01" height="12.88" viewBox="0 0 1139 1466"><path d="M773 0 L773 1466 L580 1466 L580 336 C520 391 440 446 360 481 C300 511 250 526 213 541 L213 366 C330 316 430 251 520 166 C590 101 640 46 665 0 Z"/></svg></div>
<div class="dc" style="left:609px;top:319px;width:57px;background:rgb(235,147,134)">35.<svg class="one" width="10.01" height="12.88" viewBox="0 0 1139 1466"><path d="M773 0 L773 1466 L580 1466 L580 336 C520 391 440 446 360 481 C300 511 250 526 213 541 L213 366 C330 316 430 251 520 166 C590 101 640 46 665 0 Z"/></svg></div>
<div class="dc" style="left:666px;top:319px;width:58px;background:rgb(235,147,134)">35.<svg class="one" width="10.01" height="12.88" viewBox="0 0 1139 1466"><path d="M773 0 L773 1466 L580 1466 L580 336 C520 391 440 446 360 481 C300 511 250 526 213 541 L213 366 C330 316 430 251 520 166 C590 101 640 46 665 0 Z"/></svg></div>
<div class="dc" style="left:724px;top:319px;width:57px;background:rgb(235,147,134)">35.<svg class="one" width="10.01" height="12.88" viewBox="0 0 1139 1466"><path d="M773 0 L773 1466 L580 1466 L580 336 C520 391 440 446 360 481 C300 511 250 526 213 541 L213 366 C330 316 430 251 520 166 C590 101 640 46 665 0 Z"/></svg></div>
<div class="rh" style="top:341px">26.0</div>
<div class="dc" style="left:88px;top:341px;width:58px;background:rgb(132,226,145)"><svg class="one" width="10.01" height="12.88" viewBox="0 0 1139 1466"><path d="M773 0 L773 1466 L580 1466 L580 336 C520 391 440 446 360 481 C300 511 250 526 213 541 L213 366 C330 316 430 251 520 166 C590 101 640 46 665 0 Z"/></svg>9.9</div>
<div class="dc" style="left:146px;top:341px;width:58px;background:rgb(132,208,165)"><svg class="one" width="10.01" height="12.88" viewBox="0 0 1139 1466"><path d="M773 0 L773 1466 L580 1466 L580 336 C520 391 440 446 360 481 C300 511 250 526 213 541 L213 366 C330 316 430 251 520 166 C590 101 640 46 665 0 Z"/></svg>7.<svg class="one" width="10.01" height="12.88" viewBox="0 0 1139 1466"><path d="M773 0 L773 1466 L580 1466 L580 336 C520 391 440 446 360 481 C300 511 250 526 213 541 L213 366 C330 316 430 251 520 166 C590 101 640 46 665 0 Z"/></svg></div>
<div class="dc" style="left:204px;top:341px;width:58px;background:rgb(132,208,165)"><svg class="one" width="10.01" height="12.88" viewBox="0 0 1139 1466"><path d="M773 0 L773 1466 L580 1466 L580 336 C520 391 440 446 360 481 C300 511 250 526 213 541 L213 366 C330 316 430 251 520 166 C590 101 640 46 665 0 Z"/></svg>7.<svg class="one" width="10.01" height="12.88" viewBox="0 0 1139 1466"><path d="M773 0 L773 1466 L580 1466 L580 336 C520 391 440 446 360 481 C300 511 250 526 213 541 L213 366 C330 316 430 251 520 166 C590 101 640 46 665 0 Z"/></svg></div>
<div class="dc" style="left:262px;top:341px;width:58px;background:rgb(167,204,135)">25.9</div>
<div class="dc" style="left:320px;top:341px;width:58px;background:rgb(218,161,135)">32.9</div>
<div class="dc" style="left:378px;top:341px;width:58px;background:rgb(242,141,134)">36.<svg class="one" width="10.01" height="12.88" viewBox="0 0 1139 1466"><path d="M773 0 L773 1466 L580 1466 L580 336 C520 391 440 446 360 481 C300 511 250 526 213 541 L213 366 C330 316 430 251 520 166 C590 101 640 46 665 0 Z"/></svg></div>
<div class="dc" style="left:436px;top:341px;width:58px;background:rgb(242,141,134)">36.<svg class="one" width="10.01" height="12.88" viewBox="0 0 1139 1466"><path d="M773 0 L773 1466 L580 1466 L580 336 C520 391 440 446 360 481 C300 511 250 526 213 541 L213 366 C330 316 430 251 520 166 C590 101 640 46 665 0 Z"/></svg></div>
<div class="dc" style="left:494px;top:341px;width:57px;background:rgb(242,141,134)">36.<svg class="one" width="10.01" height="12.88" viewBox="0 0 1139 1466"><path d="M773 0 L773 1466 L580 1466 L580 336 C520 391 440 446 360 481 C300 511 250 526 213 541 L213 366 C330 316 430 251 520 166 C590 101 640 46 665 0 Z"/></svg></div>
<div class="dc" style="left:551px;top:341px;width:58px;background:rgb(242,141,134)">36.<svg class="one" width="10.01" height="12.88" viewBox="0 0 1139 1466"><path d="M773 0 L773 1466 L580 1466 L580 336 C520 391 440 446 360 481 C300 511 250 526 213 541 L213 366 C330 316 430 251 520 166 C590 101 640 46 665 0 Z"/></svg></div>
<div class="dc" style="left:609px;top:341px;width:57px;background:rgb(242,141,134)">36.<svg class="one" width="10.01" height="12.88" viewBox="0 0 1139 1466"><path d="M773 0 L773 1466 L580 1466 L580 336 C520 391 440 446 360 481 C300 511 250 526 213 541 L213 366 C330 316 430 251 520 166 C590 101 640 46 665 0 Z"/></svg></div>
<div class="dc" style="left:666px;top:341px;width:58px;background:rgb(242,141,134)">36.<svg class="one" width="10.01" height="12.88" viewBox="0 0 1139 1466"><path d="M773 0 L773 1466 L580 1466 L580 336 C520 391 440 446 360 481 C300 511 250 526 213 541 L213 366 C330 316 430 251 520 166 C590 101 640 46 665 0 Z"/></svg></div>
<div class="dc" style="left:724px;top:341px;width:57px;background:rgb(242,141,134)">36.<svg class="one" width="10.01" height="12.88" viewBox="0 0 1139 1466"><path d="M773 0 L773 1466 L580 1466 L580 336 C520 391 440 446 360 481 C300 511 250 526 213 541 L213 366 C330 316 430 251 520 166 C590 101 640 46 665 0 Z"/></svg></div>
<div class="rh" style="top:363px">20.0</div>
<div class="dc" style="left:88px;top:363px;width:58px;background:rgb(132,226,145)"><svg class="one" width="10.01" height="12.88" viewBox="0 0 1139 1466"><path d="M773 0 L773 1466 L580 1466 L580 336 C520 391 440 446 360 481 C300 511 250 526 213 541 L213 366 C330 316 430 251 520 166 C590 101 640 46 665 0 Z"/></svg>9.9</div>
<div class="dc" style="left:146px;top:363px;width:58px;background:rgb(132,208,165)"><svg class="one" width="10.01" height="12.88" viewBox="0 0 1139 1466"><path d="M773 0 L773 1466 L580 1466 L580 336 C520 391 440 446 360 481 C300 511 250 526 213 541 L213 366 C330 316 430 251 520 166 C590 101 640 46 665 0 Z"/></svg>7.<svg class="one" width="10.01" height="12.88" viewBox="0 0 1139 1466"><path d="M773 0 L773 1466 L580 1466 L580 336 C520 391 440 446 360 481 C300 511 250 526 213 541 L213 366 C330 316 430 251 520 166 C590 101 640 46 665 0 Z"/></svg></div>
<div class="dc" style="left:204px;top:363px;width:58px;background:rgb(132,208,165)"><svg class="one" width="10.01" height="12.88" viewBox="0 0 1139 1466"><path d="M773 0 L773 1466 L580 1466 L580 336 C520 391 440 446 360 481 C300 511 250 526 213 541 L213 366 C330 316 430 251 520 166 C590 101 640 46 665 0 Z"/></svg>7.<svg class="one" width="10.01" height="12.88" viewBox="0 0 1139 1466"><path d="M773 0 L773 1466 L580 1466 L580 336 C520 391 440 446 360 481 C300 511 250 526 213 541 L213 366 C330 316 430 251 520 166 C590 101 640 46 665 0 Z"/></svg></div>
<div class="dc" style="left:262px;top:363px;width:58px;background:rgb(175,198,135)">27.0</div>
<div class="dc" style="left:320px;top:363px;width:58px;background:rgb(226,154,134)">34.0</div>
<div class="dc" style="left:378px;top:363px;width:58px;background:rgb(250,134,134)">37.2</div>
<div class="dc" style="left:436px;top:363px;width:58px;background:rgb(250,134,134)">37.2</div>
<div class="dc" style="left:494px;top:363px;width:57px;background:rgb(250,134,134)">37.2</div>
<div class="dc" style="left:551px;top:363px;width:58px;background:rgb(250,134,134)">37.2</div>
<div class="dc" style="left:609px;top:363px;width:57px;background:rgb(250,134,134)">37.2</div>
<div class="dc" style="left:666px;top:363px;width:58px;background:rgb(250,134,134)">37.2</div>
<div class="dc" style="left:724px;top:363px;width:57px;background:rgb(250,134,134)">37.2</div>
<div class="ch" style="left:88px;width:58px">500</div>
<div class="ch" style="left:146px;width:58px"><svg class="one" width="10.01" height="12.88" viewBox="0 0 1139 1466"><path d="M773 0 L773 1466 L580 1466 L580 336 C520 391 440 446 360 481 C300 511 250 526 213 541 L213 366 C330 316 430 251 520 166 C590 101 640 46 665 0 Z"/></svg>000</div>
<div class="ch" style="left:204px;width:58px"><svg class="one" width="10.01" height="12.88" viewBox="0 0 1139 1466"><path d="M773 0 L773 1466 L580 1466 L580 336 C520 391 440 446 360 481 C300 511 250 526 213 541 L213 366 C330 316 430 251 520 166 C590 101 640 46 665 0 Z"/></svg>500</div>
<div class="ch" style="left:262px;width:58px">2300</div>
<div class="ch" style="left:320px;width:58px">2900</div>
<div class="ch" style="left:378px;width:58px">3400</div>
<div class="ch" style="left:436px;width:58px">4000</div>
<div class="ch" style="left:494px;width:57px">4600</div>
<div class="ch" style="left:551px;width:58px">5200</div>
<div class="ch" style="left:609px;width:57px">5700</div>
<div class="ch" style="left:666px;width:58px">6300</div>
<div class="ch" style="left:724px;width:57px">7000</div>
<div id="corner" class="a"></div>
<div id="rpm" class="a">rpm</div>
<div class="bb bd" style="left:512px">
<svg class="a" style="left:-1px;top:-1px" width="66" height="32" viewBox="0 0 66 32"><path d="M22.3 5.3 L33 5.3 A11 12.7 0 0 1 44 18 L44 27 L37 27 L37 18.5 A4.5 4.5 0 0 0 34 14.3 L34 18.5 L24 18.5 L24 16 L22.3 16 Z" fill="#cdcdcd"/><path d="M33 6.8 A9.5 11.2 0 0 1 42.5 18 L42.5 26.5" fill="none" stroke="#bdbdbd" stroke-width="2.6"/></svg>
</div>
<div class="bb bd" style="left:580px">
<svg class="a" style="left:-1px;top:-1px" width="66" height="32" viewBox="0 0 66 32"><path d="M43.7 5.3 L33 5.3 A11 12.7 0 0 0 22 18 L22 27 L29 27 L29 18.5 A4.5 4.5 0 0 1 32 14.3 L32 18.5 L42 18.5 L42 16 L43.7 16 Z" fill="#cdcdcd"/><path d="M33 6.8 A9.5 11.2 0 0 0 23.5 18 L23.5 26.5" fill="none" stroke="#bdbdbd" stroke-width="2.6"/></svg>
</div>
<div class="bb" style="left:648px"><u>B</u>urn</div>
<div class="bb" style="left:716px"><u>C</u>lose</div>
</body></html>
